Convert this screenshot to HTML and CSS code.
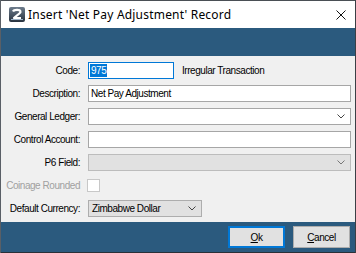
FILE: index.html
```html
<!DOCTYPE html>
<html>
<head>
<meta charset="utf-8">
<link rel="stylesheet" href="styles.css">
</head>
<body>
<div class="window">
  <div class="titlebar">
    <svg class="app-icon" width="16" height="15" viewBox="0 0 16 15">
      <defs>
        <linearGradient id="g" x1="0" y1="0" x2="0" y2="1">
          <stop offset="0" stop-color="#6d7c8c"/>
          <stop offset="1" stop-color="#27323f"/>
        </linearGradient>
      </defs>
      <rect x="0" y="0" width="16" height="15" rx="2" fill="url(#g)"/>
      <path d="M4 4.5 C5 2.5 11 2.2 11.5 4.5 C12 6.5 8 7.5 5 11 L12 11" fill="none" stroke="#fff" stroke-width="2.2" stroke-linejoin="round"/>
      <path d="M2 12.5 L14 12.5" stroke="#9fb4c8" stroke-width="1"/>
    </svg>
    <span class="title">Insert 'Net Pay Adjustment' Record</span>
    <svg class="close" width="10" height="10" viewBox="0 0 10 10">
      <path d="M0.5 0.5 L9.5 9.5 M9.5 0.5 L0.5 9.5" stroke="#111" stroke-width="1"/>
    </svg>
  </div>
  <div class="band"></div>
  <div class="form">
    <label class="lbl">Code:</label>
    <div class="field code-field">
      <div class="box focus code-box"><span class="sel">975</span></div>
      <span class="note">Irregular Transaction</span>
    </div>
    <label class="lbl">Description:</label>
    <div class="box">Net Pay Adjustment</div>
    <label class="lbl">General Ledger:</label>
    <div class="box combo"><span></span><svg class="chev" width="8" height="5" viewBox="0 0 8 5"><path d="M0.5 0.5 L4 4 L7.5 0.5" fill="none" stroke="#444" stroke-width="1"/></svg></div>
    <label class="lbl">Control Account:</label>
    <div class="box"></div>
    <label class="lbl">P6 Field:</label>
    <div class="box combo disabled"><span></span><svg class="chev" width="8" height="5" viewBox="0 0 8 5"><path d="M0.5 0.5 L4 4 L7.5 0.5" fill="none" stroke="#777" stroke-width="1"/></svg></div>
    <label class="lbl dim">Coinage Rounded</label>
    <div class="field"><div class="check"></div></div>
    <label class="lbl">Default Currency:</label>
    <div class="field"><div class="box combo dropdown currency"><span>Zimbabwe Dollar</span><svg class="chev" width="8" height="5" viewBox="0 0 8 5"><path d="M0.5 0.5 L4 4 L7.5 0.5" fill="none" stroke="#444" stroke-width="1"/></svg></div></div>
  </div>
  <div class="footer">
    <button class="btn default"><u>O</u>k</button>
    <button class="btn"><u>C</u>ancel</button>
  </div>
</div>
</body>
</html>
```
FILE: styles.css
```css
html, body {
  margin: 0;
  padding: 0;
  background: #3a4048;
}
body {
  width: 356px;
  height: 253px;
  overflow: hidden;
  font-family: "Liberation Sans", Arial, sans-serif;
  font-size: 10px;
  letter-spacing: -0.45px;
  color: #000;
}
.window {
  width: 356px;
  height: 253px;
  border-left: 1px solid #5a5f66;
  border-right: 1px solid #3b3f45;
  display: flex;
  flex-direction: column;
  box-sizing: border-box;
}
.titlebar {
  height: 28px;
  background: #fff;
  display: flex;
  align-items: center;
  padding: 0 0 0 8px;
  box-sizing: border-box;
  border-top: 1px solid #4a4f55;
}
.app-icon {
  flex: none;
  margin-right: 3px;
}
.title {
  font-family: "Noto Sans", "Open Sans", sans-serif;
  font-size: 12px;
  color: #000;
  flex: 1;
  letter-spacing: 0.2px;
}
.close {
  flex: none;
  margin-right: 9px;
}
.band {
  height: 28px;
  background: #2b5a7e;
}
.form {
  flex: 1;
  background: #f0f0f0;
  display: grid;
  grid-template-columns: 79px 263px;
  column-gap: 8px;
  row-gap: 6px;
  grid-auto-rows: 17px;
  padding: 6px 0 0 0;
  align-items: center;
}
.lbl {
  text-align: right;
  white-space: nowrap;
  line-height: 17px;
  color: #000;
}
.lbl.dim {
  color: #a0a0a0;
}
.field {
  display: flex;
  align-items: center;
  height: 17px;
}
.box {
  height: 17px;
  box-sizing: border-box;
  background: #fff;
  border: 1px solid #a6a6a6;
  line-height: 15px;
  padding: 0 2px;
  white-space: nowrap;
  overflow: hidden;
}
.box.focus {
  border-color: #0078d7;
}
.code-box {
  width: 86px;
  padding-left: 1px;
}
.sel {
  background: #0078d7;
  color: #fff;
  display: inline-block;
  line-height: 13px;
  padding: 0 1px;
}
.note {
  margin-left: 8px;
}
.combo {
  display: flex;
  align-items: center;
  justify-content: space-between;
  padding-right: 5px;
}
.combo span {
  flex: 1;
}
.chev {
  flex: none;
}
.disabled {
  background: #e1e1e1;
  border-color: #bcbcbc;
}
.dropdown {
  background: #e1e1e1;
  border-color: #adadad;
}
.currency {
  width: 114px;
  padding-left: 3px;
}
.check {
  width: 11px;
  height: 11px;
  background: #fff;
  border: 1px solid #c8c8c8;
  margin-left: -1px;
}
.footer {
  height: 31px;
  background: #2b5a7e;
  display: flex;
  justify-content: flex-end;
  align-items: flex-start;
  gap: 8px;
  padding: 4px 5px 0 0;
  box-sizing: border-box;
  border-bottom: 1px solid #2a3038;
}
.btn {
  width: 57px;
  height: 22px;
  box-sizing: border-box;
  background: #e1e1e1;
  border: 1px solid #adadad;
  font-family: "Liberation Sans", Arial, sans-serif;
  font-size: 10px;
  letter-spacing: -0.45px;
  color: #000;
  padding: 0;
  margin: 0;
}
.btn.default {
  border: 2px solid #0078d7;
}
```
